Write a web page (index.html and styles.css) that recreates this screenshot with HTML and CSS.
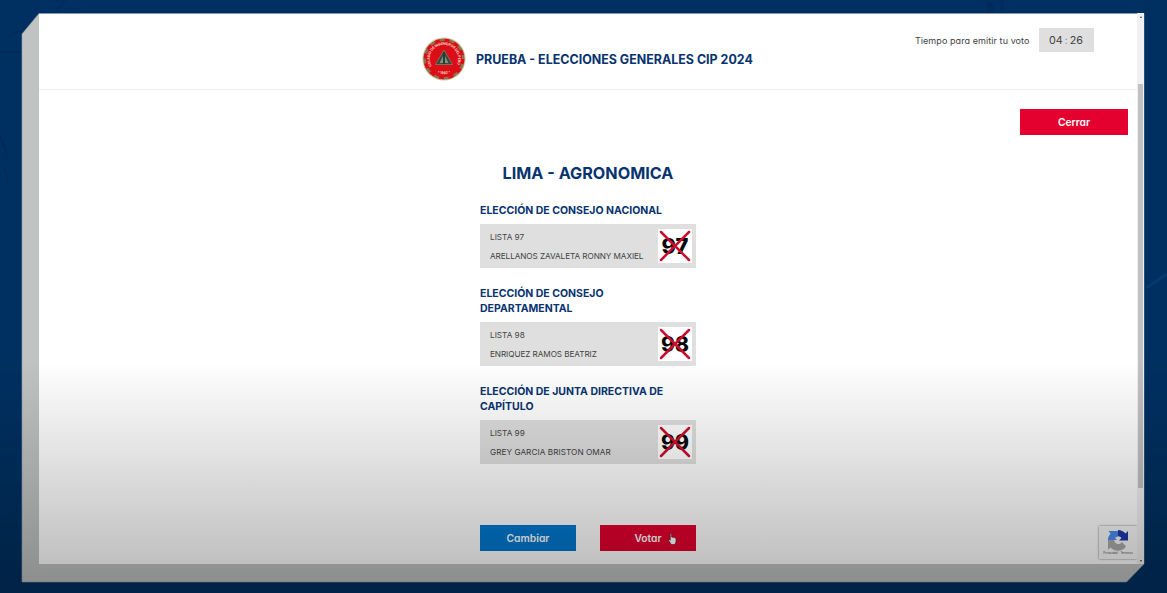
FILE: index.html
```html
<!DOCTYPE html>
<html lang="es">
<head>
<meta charset="utf-8">
<title>Elecciones Generales CIP 2024</title>
<link rel="stylesheet" href="styles.css">
</head>
<body>
<div class="stage">
  <svg class="backdrop" width="1167" height="593" viewBox="0 0 1167 593" aria-hidden="true">
    <g fill="none" stroke="#002455" stroke-width="2" opacity=".4">
      <path d="M57 12 65 0M8 37Q12 33 22 31M0 137Q6 149 8 160M5 168 8 184M0 52H22"/>
      <path d="M988 12V4h4v8M1002 12V0" stroke-width="3"/>
    </g>
    <path d="M1146 288 1167 274" stroke="#0a4a87" stroke-width="3" opacity=".4"/>
  </svg>
  <svg class="backdrop" width="1167" height="593" viewBox="0 0 1167 593" aria-hidden="true">
    <path d="M39 13.500 22 34V582H1126.500L1144 564V13.500Z" fill="#c1c2c2" stroke="#8fa3b5" stroke-width=".6"/>
  </svg>
  <div class="window">
    <div class="page">
      <header class="header">
        <div class="brand">
          <svg class="logo" width="44" height="44" viewBox="0 0 44 44" aria-hidden="true">
            <defs><path id="ring" d="M9.700 29.100A14.200 14.200 0 1 1 34.300 29.100"/><path id="ringlow" d="M12 33.500A15.500 15.500 0 0 0 32 33.500"/></defs>
            <circle cx="22" cy="22" r="21.600" fill="#d9c7a0"/>
            <circle cx="22" cy="22" r="20.600" fill="#8a7450"/>
            <circle cx="22" cy="22" r="18" fill="#dc0d17"/>
            <circle cx="22" cy="22" r="18.800" fill="none" stroke="#dc0d17" stroke-width="3" stroke-dasharray="5 4.843"/>
            <text class="seal-text"><textPath href="#ring" textLength="57">COLEGIO DE INGENIEROS DEL PERU</textPath></text>
            <text class="seal-text" text-anchor="middle"><textPath href="#ringlow" startOffset="50%">• 1962 •</textPath></text>
            <path d="M22 13 30.500 27.500H13.500Z" fill="#36483e" stroke="#77745a" stroke-width="1"/>
            <path d="M21 19v7h-3.500ZM23 19v7h3.500Z" fill="#7f927c"/>
            <path d="M22 15v12" stroke="#222c29" stroke-width="1"/>
          </svg>
          <h1 class="brand-title">PRUEBA - ELECCIONES GENERALES CIP 2024</h1>
        </div>
        <div class="timer">
          <span class="timer-label">Tiempo para emitir tu voto</span>
          <span class="timer-value"><span>04</span><span class="colon">:</span><span>26</span></span>
        </div>
      </header>
      <main class="main">
        <div class="close-row"><button class="btn btn-close">Cerrar</button></div>
        <h2 class="chapter">LIMA - AGRONOMICA</h2>
        <div class="ballot">
          <section class="vote">
            <h3 class="vote-title">ELECCIÓN DE CONSEJO NACIONAL</h3>
            <div class="card">
              <div class="candidate"><span>LISTA 97</span><span class="name">ARELLANOS ZAVALETA RONNY MAXIEL</span></div>
              <svg class="mark" width="34" height="34" viewBox="0 0 34 34"><text class="mark-number" x="17" y="24.500" textLength="27" lengthAdjust="spacingAndGlyphs">97</text><path class="cross" d="M3 3 31 31M31 3 3 31"/></svg>
            </div>
          </section>
          <section class="vote">
            <h3 class="vote-title">ELECCIÓN DE CONSEJO<br>DEPARTAMENTAL</h3>
            <div class="card">
              <div class="candidate"><span>LISTA 98</span><span class="name">ENRIQUEZ RAMOS BEATRIZ</span></div>
              <svg class="mark" width="34" height="34" viewBox="0 0 34 34"><text class="mark-number" x="17" y="24.500" textLength="28" lengthAdjust="spacingAndGlyphs">98</text><path class="cross" d="M3 3 31 31M31 3 3 31"/></svg>
            </div>
          </section>
          <section class="vote">
            <h3 class="vote-title">ELECCIÓN DE JUNTA DIRECTIVA DE<br>CAPÍTULO</h3>
            <div class="card">
              <div class="candidate"><span>LISTA 99</span><span class="name name-wide">GREY GARCIA BRISTON OMAR</span></div>
              <svg class="mark" width="34" height="34" viewBox="0 0 34 34"><text class="mark-number" x="17" y="24.500" textLength="28" lengthAdjust="spacingAndGlyphs">99</text><path class="cross" d="M3 3 31 31M31 3 3 31"/></svg>
            </div>
          </section>
          <div class="actions">
            <button class="btn btn-change">Cambiar</button>
            <button class="btn btn-vote">Votar</button>
          </div>
        </div>
      </main>
    </div>
    <div class="scrollbar"><i class="arrow"></i><i class="thumb"></i><i class="arrow arrow-down"></i></div>
    <div class="recaptcha">
      <svg width="22" height="22" viewBox="0 0 22 22" aria-hidden="true">
        <path d="M1 11A10 10 0 0 1 3.500 4.500L1.500 2H11V7.500A4 4 0 0 0 8 9L10 11Z" fill="#4b8df0"/>
        <path d="M11 1A10 10 0 0 1 18.500 4.500L21 2V11.500H12L14.500 9A4 4 0 0 0 11 7.200Z" fill="#1c3aa9"/>
        <path d="M1 11H7A4.500 4.500 0 0 0 13.500 14.500L15 13 19 17.500A10 10 0 0 1 3.500 18.500L1 21Z" fill="#ababab"/>
      </svg>
      <span class="recaptcha-text">Privacidad - Términos</span>
    </div>
  </div>
  <svg class="cursor" width="9" height="12" viewBox="0 0 9 12" aria-hidden="true"><path d="M2.200.7Q3.200 0 3.600 1V4L7 4.700Q8 5 8 6V8.500L7 11.500H3.300L.6 7.500Q.3 6.500 1.200 6.500L2.300 7.200Z" fill="#fff" stroke="#4b1621" stroke-width=".6"/></svg>
  <div class="shade"></div>
</div>
</body>
</html>
```

FILE: styles.css
```css
* { box-sizing: border-box; }
body {
  margin: 0;
  font-family: Inter, "Open Sans", sans-serif;
  font-feature-settings: "cv11";
  color: #424242;
}
h1, h2, h3 { margin: 0; font-weight: 700; color: #073370; white-space: nowrap; }
.stage {
  position: relative;
  width: 1167px;
  height: 593px;
  padding: 13px 23px 0 39px;
  overflow: hidden;
  background: #003061;
}
.backdrop { position: absolute; left: 0; top: 0; }
.window {
  position: relative;
  display: flex;
  width: 1105px;
  height: 551px;
  background: linear-gradient(#8099b1 1px, #fff 1px);
}
.page { flex: 1; }
.header {
  display: grid;
  grid-template-columns: 1fr auto 1fr;
  height: 77px;
  border-bottom: 1px solid #eee;
}
.brand {
  grid-column: 2;
  display: flex;
  align-items: center;
  gap: 10px;
  width: 332px;
  padding-top: 16px;
}
.logo { flex: none; }
.seal-text { font-size: 3.500px; font-weight: 700; fill: #f5dcc8; }
.brand-title { font-size: 12.45px; }
.timer {
  display: flex;
  justify-content: flex-end;
  align-items: center;
  gap: 9px;
  height: 24px;
  margin: 15px 43.500px 0 0;
}
.timer-label { font-size: 9px; letter-spacing: .08px; white-space: nowrap; }
.timer-value {
  display: flex;
  align-items: center;
  justify-content: center;
  gap: 2px;
  width: 55px;
  height: 24px;
  background: #dfdfdf;
  font-size: 10.8px;
}
.colon { font-size: 10px; color: #888; }
.main { padding-top: 19px; }
.close-row { display: flex; justify-content: flex-end; padding-right: 9px; }
.btn {
  height: 26px;
  padding: 0;
  border: 0;
  color: #fff;
  font: 600 10.3px Inter, sans-serif;
  font-feature-settings: "cv11";
}
.btn-close { width: 108px; background: #e4002f; }
.chapter {
  margin-top: 26px;
  font-size: 16.2px;
  line-height: 24px;
  text-align: center;
}
.ballot { width: 216px; margin: 17px auto 0 441px; }
.vote { margin-bottom: 17px; }
.vote-title { padding-top: 1px; font-size: 10.5px; line-height: 15px; margin-bottom: 6px; }
.card {
  display: flex;
  justify-content: space-between;
  align-items: center;
  height: 44px;
  padding: 0 4px 0 10px;
  background: #dfdfdf;
}
.candidate {
  display: flex;
  flex-direction: column;
  padding-top: 1px;
  font-size: 8.200px;
  line-height: 19px;
  white-space: nowrap;
}
.name { letter-spacing: -.08px; }
.name-wide { letter-spacing: .05px; }
.mark { flex: none; background: #fff; }
.mark-number { font: 800 21px Inter, sans-serif; text-anchor: middle; fill: #080808; }
.cross { fill: none; stroke: #c8102e; stroke-width: 2.500; stroke-linecap: round; }
.actions { display: flex; justify-content: space-between; margin-top: 61px; }
.btn-change { width: 96px; background: #0078d0; }
.btn-vote { width: 96px; background: #e4002f; }
.scrollbar {
  display: flex;
  flex-direction: column;
  align-items: center;
  width: 7px;
  padding: 3px 0 2px;
  background: #f1f1f1;
}
.arrow { border: 1.500px solid transparent; border-top: 0; border-bottom: 2px solid #444; }
.arrow-down { margin-top: auto; transform: rotate(180deg); }
.thumb { width: 5px; height: 404px; margin-top: 66px; background: #c1c1c1; }
.recaptcha {
  position: absolute;
  right: 7px;
  bottom: 5px;
  display: flex;
  flex-direction: column;
  align-items: center;
  width: 38px;
  height: 33px;
  padding-top: 3px;
  background: #f9f9f9;
  box-shadow: 0 0 2px #777;
  clip-path: inset(-3px 0 -3px -3px);
}
.recaptcha-text { font-size: 2.800px; line-height: 4px; color: #555; white-space: nowrap; }
.cursor { position: absolute; left: 668px; top: 533px; }
.shade {
  position: absolute;
  inset: 360px 0 0;
  background: linear-gradient(rgba(0,0,0,0), rgba(0,0,0,.05) 18%, rgba(0,0,0,.25) 89%, rgba(0,0,0,.28));
  pointer-events: none;
}
```
